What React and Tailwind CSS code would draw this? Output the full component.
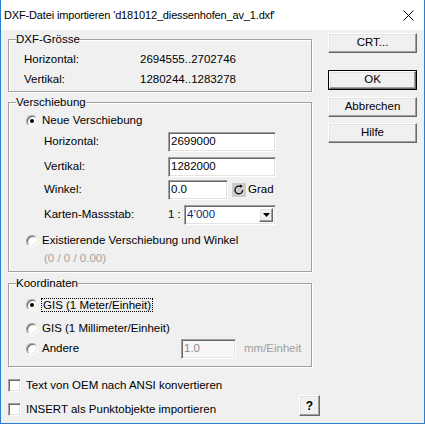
import clsx from 'clsx';

const FONT = { fontFamily: '"Liberation Sans", Arial, sans-serif' };

const ETCH =
  'border border-[#a0a0a0] shadow-[inset_1px_1px_0_#fff,1px_1px_0_#fff]';
const SUNKEN =
  'border border-t-[#a0a0a0] border-l-[#a0a0a0] border-r-white border-b-white shadow-[inset_1px_1px_0_#696969,inset_-1px_-1px_0_#e3e3e3]';
const RAISED =
  'border border-t-white border-l-white border-r-[#696969] border-b-[#696969] shadow-[inset_-1px_-1px_0_#a0a0a0,inset_1px_1px_0_#e3e3e3]';

function Group({ label, className, children }) {
  return (
    <fieldset className={clsx('w-[304px] min-w-0 p-0 m-0', ETCH, className)}>
      <legend className="ml-[7px] p-0 text-[11.5px] leading-[14px] bg-[#f0f0f0]">
        {label}
      </legend>
      {children}
    </fieldset>
  );
}

function Radio({ checked }) {
  return (
    <span
      className={clsx(
        'flex items-center justify-center w-[12px] h-[12px] rounded-full bg-white shrink-0',
        SUNKEN
      )}
    >
      {checked && <span className="w-[4px] h-[4px] rounded-full bg-black" />}
    </span>
  );
}

function Checkbox() {
  return <span className={clsx('block w-[13px] h-[13px] bg-white shrink-0', SUNKEN)} />;
}

function Input({ value, className, disabled }) {
  return (
    <div
      className={clsx(
        'h-[20px] flex items-center pl-[2px] text-[11.5px]',
        disabled ? 'bg-[#f7f7f7] text-[#8a8a8a]' : 'bg-white text-black',
        SUNKEN,
        className
      )}
    >
      {value}
    </div>
  );
}

function Button({ children, isDefault, className }) {
  const inner = (
    <div
      className={clsx(
        'flex items-center justify-center bg-[#f0f0f0] text-[11.5px]',
        RAISED,
        isDefault ? 'h-full w-full' : 'h-[20px] w-[89px]',
        !isDefault && className
      )}
    >
      {children}
    </div>
  );
  if (!isDefault) return inner;
  return (
    <div className={clsx('h-[20px] w-[89px] border border-black', className)}>
      {inner}
    </div>
  );
}

function RotateIcon() {
  return (
    <span className="flex items-center justify-center w-[14px] h-[14px] bg-[#cccccc]">
      <svg width="12" height="12" viewBox="0 0 12 12" fill="none">
        <path
          d="M9.6 6.2A3.8 3.8 0 1 1 6 2.2h2.6"
          stroke="#000"
          strokeWidth="1.3"
        />
        <path d="M7.2 0.6 9.6 2.2 7.2 3.8Z" fill="#000" />
      </svg>
    </span>
  );
}

function Row({ label, className, children }) {
  return (
    <div className={clsx('flex items-center h-[20px] pl-[35px]', className)}>
      <span className="w-[124px]">{label}</span>
      {children}
    </div>
  );
}

export default function App() {
  return (
    <div
      className="w-[425px] h-[424px] flex flex-col border-x border-b border-[#2a7fd4] text-black text-[11.5px] overflow-hidden"
      style={FONT}
    >
      <div className="h-[30px] shrink-0 bg-white flex items-center justify-between pl-[3px] pr-[10px]">
        <span className="text-[11px] tracking-[-0.15px] text-black">
          DXF-Datei importieren 'd181012_diessenhofen_av_1.dxf'
        </span>
        <svg width="11" height="11" viewBox="0 0 11 11">
          <path d="M0.5 0.5 10.5 10.5M10.5 0.5 0.5 10.5" stroke="#000" strokeWidth="1" />
        </svg>
      </div>

      <div className="flex-1 bg-[#f0f0f0] flex pl-[7px]">
        <div className="w-[312px] flex flex-col">
          <Group label="DXF-Grösse" className="mt-[2px]">
            <div className="pt-[4px] pb-[1px] pl-[15px]">
              <div className="flex items-center h-[20px]">
                <span className="w-[116px]">Horizontal:</span>
                <span>2694555..2702746</span>
              </div>
              <div className="flex items-center h-[20px]">
                <span className="w-[116px]">Vertikal:</span>
                <span>1280244..1283278</span>
              </div>
            </div>
          </Group>

          <Group label="Verschiebung" className="mt-[3px]">
            <div className="pb-[4px]">
              <div className="flex items-center h-[20px] mt-[2px] pl-[17px] gap-[4px]">
                <Radio checked />
                <span>Neue Verschiebung</span>
              </div>
              <Row label="Horizontal:" className="mt-[1px]">
                <Input value="2699000" className="w-[108px]" />
              </Row>
              <Row label="Vertikal:" className="mt-[5px]">
                <Input value="1282000" className="w-[108px]" />
              </Row>
              <Row label="Winkel:" className="mt-[3px]">
                <Input value="0.0" className="w-[60px]" />
                <span className="ml-[4px]">
                  <RotateIcon />
                </span>
                <span className="ml-[2px]">Grad</span>
              </Row>
              <Row label="Karten-Massstab:" className="mt-[5px]">
                <span className="w-[16px]">1 :</span>
                <div
                  className={clsx(
                    'w-[92px] h-[20px] bg-white flex items-center justify-between pl-[2px] pr-[2px]',
                    SUNKEN
                  )}
                >
                  <span className="text-[#0b1f7a]">4’000</span>
                  <span
                    className={clsx(
                      'w-[14px] h-[14px] flex items-center justify-center bg-[#f0f0f0]',
                      RAISED
                    )}
                  >
                    <svg width="7" height="4" viewBox="0 0 7 4">
                      <path d="M0 0h7L3.5 4Z" fill="#000" />
                    </svg>
                  </span>
                </div>
              </Row>
              <div className="flex items-center h-[20px] mt-[6px] pl-[17px] gap-[4px]">
                <Radio />
                <span>Existierende Verschiebung und Winkel</span>
              </div>
              <div className="flex items-center h-[16px] pl-[35px] text-[#a0a0a0]">
                (0 / 0 / 0.00)
              </div>
            </div>
          </Group>

          <Group label="Koordinaten" className="mt-[4px]">
            <div className="pb-[7px]">
              <div className="flex items-center h-[20px] mt-[5px] pl-[17px] gap-[3px]">
                <Radio checked />
                <span className="border border-dotted border-black px-[1px] leading-[12px]">
                  GIS (1 Meter/Einheit)
                </span>
              </div>
              <div className="flex items-center h-[20px] mt-[4px] pl-[17px] gap-[4px]">
                <Radio />
                <span>GIS (1 Millimeter/Einheit)</span>
              </div>
              <div className="flex items-center h-[20px] pl-[17px]">
                <Radio />
                <span className="ml-[4px] w-[139px]">Andere</span>
                <Input value="1.0" disabled className="w-[55px]" />
                <span className="ml-[8px] text-[#a0a0a0]">mm/Einheit</span>
              </div>
            </div>
          </Group>

          <div className="flex items-center h-[13px] mt-[12px] gap-[5px]">
            <Checkbox />
            <span>Text von OEM nach ANSI konvertieren</span>
          </div>
          <div className="flex justify-between mt-[3px] h-[21px]">
            <div className="flex items-center h-[13px] self-end gap-[5px]">
              <Checkbox />
              <span>INSERT als Punktobjekte importieren</span>
            </div>
            <div
              className={clsx(
                'w-[21px] h-[21px] flex items-center justify-center bg-[#f0f0f0] font-bold text-[12px]',
                RAISED
              )}
            >
              ?
            </div>
          </div>
        </div>

        <div className="ml-[8px] w-[89px] flex flex-col">
          <Button className="mt-[3px]">CRT...</Button>
          <Button isDefault className="mt-[17px]">
            OK
          </Button>
          <Button className="mt-[7px]">Abbrechen</Button>
          <Button className="mt-[6px]">Hilfe</Button>
        </div>
      </div>
    </div>
  );
}
